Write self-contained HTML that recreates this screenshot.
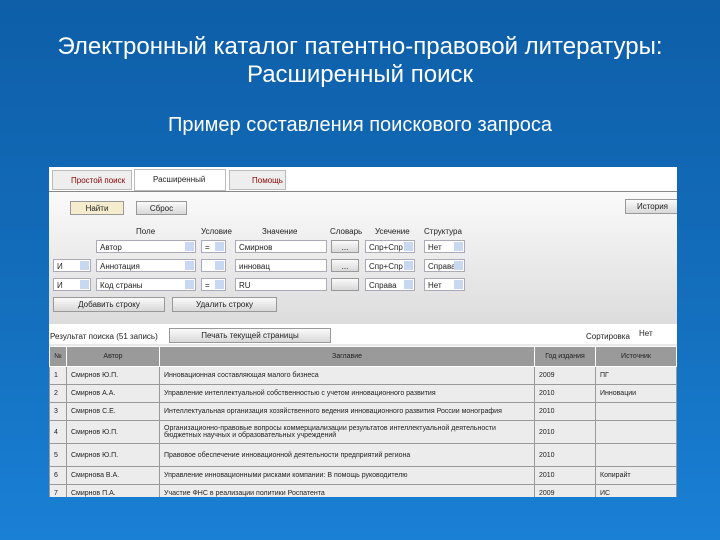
<!DOCTYPE html><html><head><meta charset="utf-8"><style>
body{margin:0;width:720px;height:540px;overflow:hidden;background:linear-gradient(180deg,#0e5ea8 0%,#1470be 60%,#1a80d6 100%);font-family:"Liberation Sans",sans-serif;position:relative}
.t{position:absolute;left:0;width:720px;text-align:center;color:#fff;font-size:24px;line-height:28px}
.a{position:absolute}
.s{position:absolute;left:49px;top:167px;width:628px;height:330px;background:#e8e8e8;overflow:hidden;font-size:8px;color:#222}
.in{position:absolute;background:#fff;border:1px solid #aab;height:13px;line-height:13px;padding-left:3px;box-sizing:border-box;white-space:nowrap;overflow:hidden}
.dd{position:absolute;right:1px;top:1px;width:9px;height:9px;background:#c8d8f0}
.btn{position:absolute;background:linear-gradient(#fafafa,#d8d8d8);border:1px solid #999;text-align:center;line-height:13px;box-sizing:border-box}
table{position:absolute;left:0;top:179px;border-collapse:collapse;width:628px;font-size:7px}
td{border:1px solid #999;padding:0 4px;background:#ececec}
th{background:#9a9a9a;color:#222;font-weight:normal;height:17px;border:1px solid #fff}
</style></head><body>
<div class="t" style="top:33px">Электронный каталог патентно-правовой литературы:</div>
<div class="t" style="top:61px">Расширенный поиск</div>
<div class="t" style="top:111px;font-size:20px">Пример составления поискового запроса</div>
<div class="s">
<div class="a" style="left:0;top:0;width:628px;height:24px;background:#fff;border-bottom:1px solid #888"></div>
<div class="a" style="left:3px;top:3px;width:80px;height:20px;background:#eee;border:1px solid #bbb;line-height:20px;padding-left:18px;box-sizing:border-box;color:#800">Простой поиск</div>
<div class="a" style="left:85px;top:2px;width:92px;height:22px;background:#fff;border:1px solid #bbb;line-height:20px;padding-left:18px;box-sizing:border-box">Расширенный поиск</div>
<div class="a" style="left:180px;top:3px;width:57px;height:20px;background:#eee;border:1px solid #bbb;line-height:20px;padding-left:22px;box-sizing:border-box;color:#800">Помощь</div>
<div class="a" style="left:0;top:25px;width:628px;height:132px;background:linear-gradient(#fafafa,#dcdcdc)"></div>
<div class="btn" style="left:21px;top:34px;width:54px;height:14px;background:#f4eccc">Найти</div>
<div class="btn" style="left:87px;top:34px;width:51px;height:14px">Сброс</div>
<div class="btn" style="left:576px;top:32px;width:55px;height:15px">История</div>
<div class="a" style="top:60px;left:87px">Поле</div><div class="a" style="top:60px;left:152px">Условие</div><div class="a" style="top:60px;left:213px">Значение</div><div class="a" style="top:60px;left:281px">Словарь</div><div class="a" style="top:60px;left:326px">Усечение</div><div class="a" style="top:60px;left:375px">Структура</div>
<div class="in" style="left:47px;top:73px;width:100px">Автор<i class="dd"></i></div><div class="in" style="left:152px;top:73px;width:25px">=<i class="dd"></i></div><div class="in" style="left:186px;top:73px;width:92px">Смирнов</div><div class="btn" style="left:282px;top:73px;width:28px;height:13px">...</div><div class="in" style="left:316px;top:73px;width:50px">Спр+Спр<i class="dd"></i></div><div class="in" style="left:375px;top:73px;width:41px">Нет<i class="dd"></i></div>
<div class="in" style="left:4px;top:92px;width:38px">И<i class="dd"></i></div><div class="in" style="left:47px;top:92px;width:100px">Аннотация<i class="dd"></i></div><div class="in" style="left:152px;top:92px;width:25px"><i class="dd"></i></div><div class="in" style="left:186px;top:92px;width:92px">инновац</div><div class="btn" style="left:282px;top:92px;width:28px;height:13px">...</div><div class="in" style="left:316px;top:92px;width:50px">Спр+Спр<i class="dd"></i></div><div class="in" style="left:375px;top:92px;width:41px">Справа<i class="dd"></i></div>
<div class="in" style="left:4px;top:111px;width:38px">И<i class="dd"></i></div><div class="in" style="left:47px;top:111px;width:100px">Код страны<i class="dd"></i></div><div class="in" style="left:152px;top:111px;width:25px">=<i class="dd"></i></div><div class="in" style="left:186px;top:111px;width:92px">RU</div><div class="btn" style="left:282px;top:111px;width:28px;height:13px"></div><div class="in" style="left:316px;top:111px;width:50px">Справа<i class="dd"></i></div><div class="in" style="left:375px;top:111px;width:41px">Нет<i class="dd"></i></div>
<div class="btn" style="left:4px;top:130px;width:112px;height:15px">Добавить строку</div>
<div class="btn" style="left:123px;top:130px;width:105px;height:15px">Удалить строку</div>
<div class="a" style="left:0;top:157px;width:628px;height:20px;background:#fff"></div>
<div class="a" style="left:1px;top:165px">Результат поиска (51 запись)</div>
<div class="btn" style="left:120px;top:161px;width:162px;height:15px">Печать текущей страницы</div>
<div class="a" style="left:537px;top:165px">Сортировка</div><div class="a" style="left:590px;top:162px">Нет</div>
<table>
<tr><th style="width:14px">№</th><th style="width:90px">Автор</th><th>Заглавие</th><th style="width:58px">Год издания</th><th style="width:78px">Источник</th></tr>
<tr style="height:18px"><td>1</td><td>Смирнов Ю.П.</td><td>Инновационная составляющая малого бизнеса</td><td>2009</td><td>ПГ</td></tr>
<tr style="height:18px"><td>2</td><td>Смирнов А.А.</td><td>Управление интеллектуальной собственностью с учетом инновационного развития</td><td>2010</td><td>Инновации</td></tr>
<tr style="height:18px"><td>3</td><td>Смирнов С.Е.</td><td>Интеллектуальная организация хозяйственного ведения инновационного развития России монография</td><td>2010</td><td></td></tr>
<tr style="height:23px"><td>4</td><td>Смирнов Ю.П.</td><td>Организационно-правовые вопросы коммерциализации результатов интеллектуальной деятельности бюджетных научных и образовательных учреждений</td><td>2010</td><td></td></tr>
<tr style="height:23px"><td>5</td><td>Смирнов Ю.П.</td><td>Правовое обеспечение инновационной деятельности предприятий региона</td><td>2010</td><td></td></tr>
<tr style="height:18px"><td>6</td><td>Смирнова В.А.</td><td>Управление инновационными рисками компании: В помощь руководителю</td><td>2010</td><td>Копирайт</td></tr>
<tr style="height:18px"><td>7</td><td>Смирнов П.А.</td><td>Участие ФНС в реализации политики Роспатента</td><td>2009</td><td>ИС</td></tr>
</table>
</div>
</body></html>
